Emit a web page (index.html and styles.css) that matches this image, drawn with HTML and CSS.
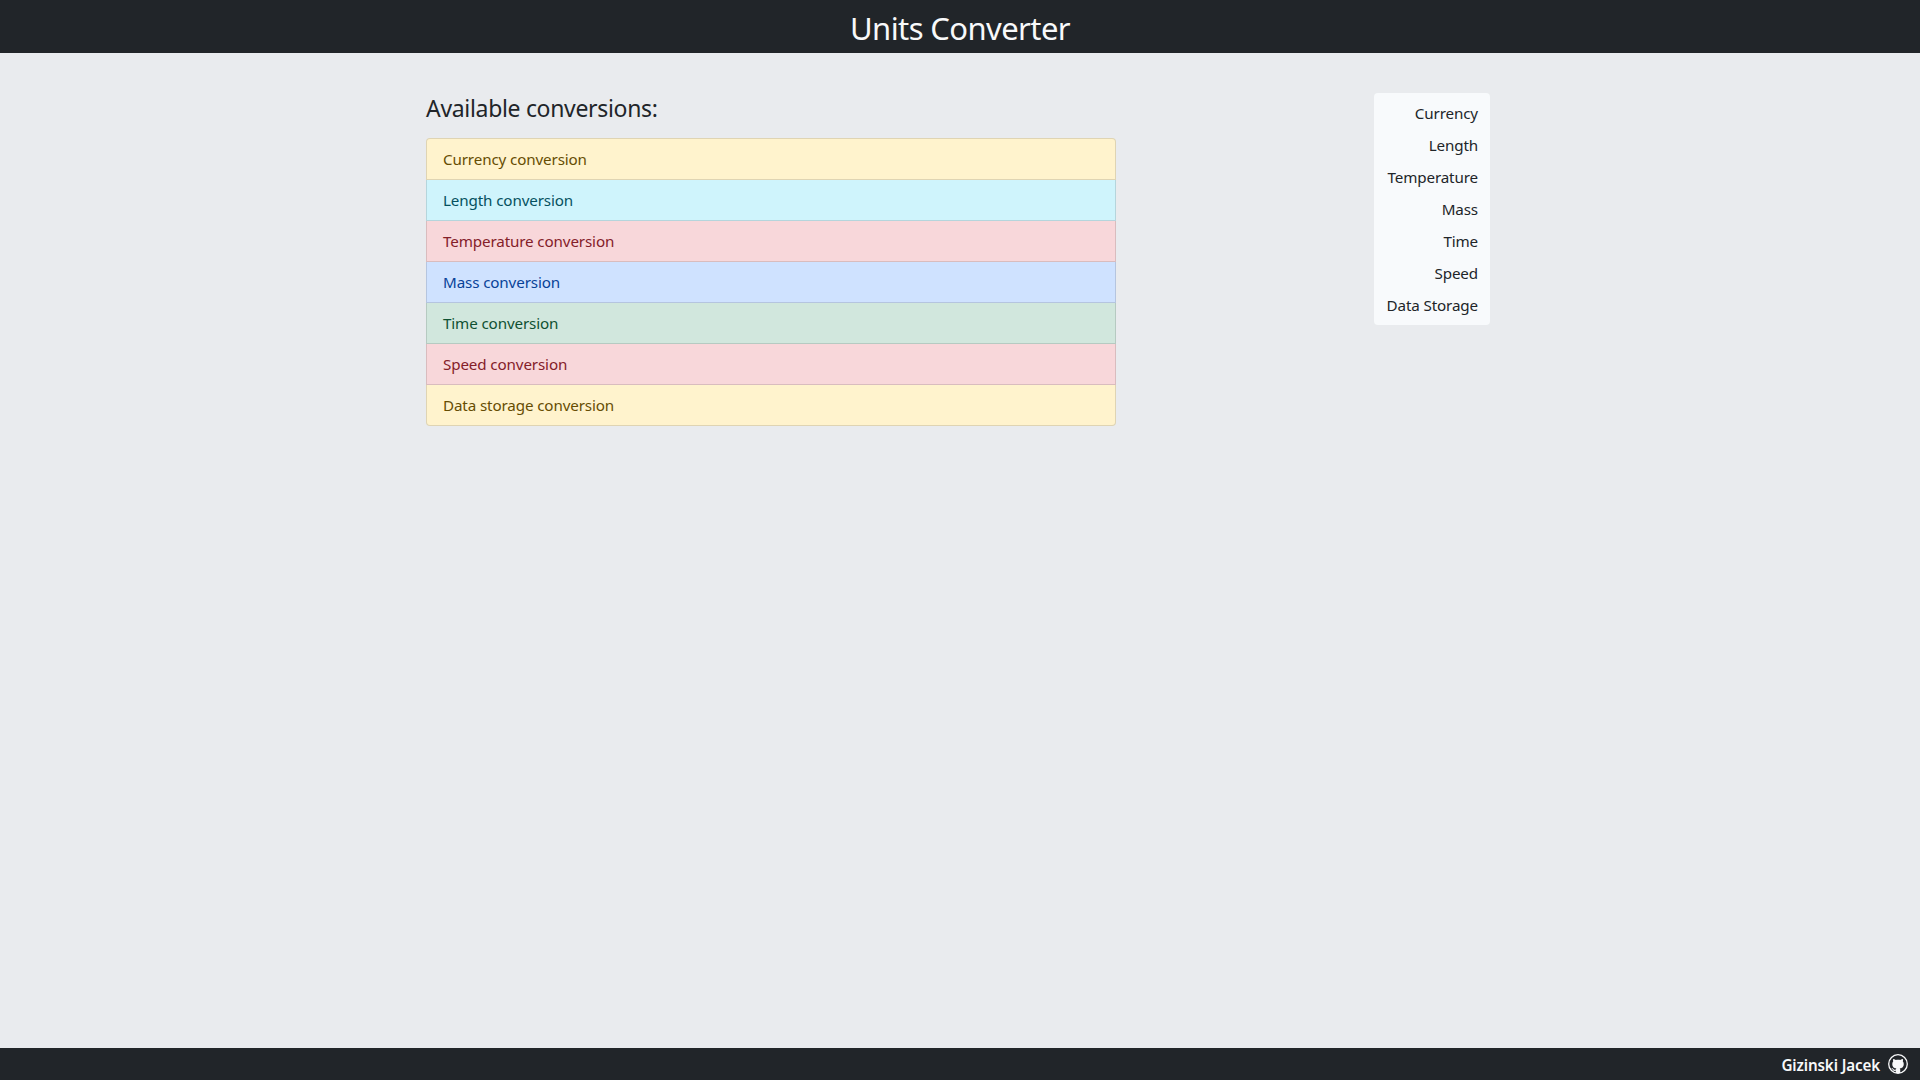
FILE: index.html
```html
<!DOCTYPE html>
<html lang="en">
<head>
<meta charset="utf-8">
<title>Units Converter</title>
<link rel="stylesheet" href="styles.css">
</head>
<body>
<header class="header"><h1 class="header-title">Units Converter</h1></header>
<main class="main">
  <section class="conversions">
    <h2 class="conversions-title">Available conversions:</h2>
    <ul class="list">
      <li class="item warning">Currency conversion</li>
      <li class="item info">Length conversion</li>
      <li class="item danger">Temperature conversion</li>
      <li class="item primary">Mass conversion</li>
      <li class="item success">Time conversion</li>
      <li class="item danger">Speed conversion</li>
      <li class="item warning">Data storage conversion</li>
    </ul>
  </section>
  <nav class="menu">
    <a class="menu-link">Currency</a>
    <a class="menu-link">Length</a>
    <a class="menu-link">Temperature</a>
    <a class="menu-link">Mass</a>
    <a class="menu-link">Time</a>
    <a class="menu-link">Speed</a>
    <a class="menu-link">Data Storage</a>
  </nav>
</main>
<footer class="footer">
  <span class="author">Gizinski Jacek</span>
  <svg class="github" viewBox="0 0 20 20" aria-hidden="true">
    <circle cx="10" cy="10" r="9.3" fill="none" stroke="currentColor" stroke-width="1.3"/>
    <path transform="translate(1 1.4) scale(1.125)" fill="currentColor" d="M5.47 15.59c.4.07.55-.17.55-.38 0-.19-.01-.82-.01-1.49-2.01.37-2.53-.49-2.69-.94-.09-.23-.48-.94-.82-1.13-.28-.15-.68-.52-.01-.53.63-.01 1.08.58 1.23.82.72 1.21 1.87.87 2.33.66.07-.52.28-.87.51-1.07-1.78-.2-3.64-.89-3.64-3.95 0-.87.31-1.59.82-2.15-.08-.2-.36-1.02.08-2.12 0 0 .67-.21 2.2.82.64-.18 1.32-.27 2-.27s1.36.09 2 .27c1.53-1.04 2.2-.82 2.2-.82.44 1.1.16 1.92.08 2.12.51.56.82 1.27.82 2.15 0 3.07-1.87 3.75-3.65 3.95.29.25.54.73.54 1.48 0 1.07-.01 1.93-.01 2.2 0 .21.15.46.55.38z"/>
  </svg>
</footer>
</body>
</html>
```
FILE: styles.css
```css
* { box-sizing: border-box; }

body {
  margin: 0;
  min-height: 100vh;
  display: flex;
  flex-direction: column;
  background: #e9ebee;
  color: #212529;
  font: 400 15.2px/24px "Noto Sans", "Open Sans", sans-serif;
  letter-spacing: -0.13px;
}

h1, h2, ul { margin: 0; padding: 0; font-weight: 400; }

.header {
  height: 53px;
  background: #212529;
  color: #f8f9fa;
  text-align: center;
}

.header-title { font-size: 31px; line-height: 57px; letter-spacing: -0.6px; }

.main {
  flex: 1;
  display: flex;
  justify-content: space-between;
  align-items: flex-start;
  width: 1064px;
  margin-left: 426px;
  padding-top: 40px;
}

.conversions { width: 690px; }

.conversions-title {
  font-size: 23px;
  line-height: 31px;
  letter-spacing: -0.32px;
  margin-bottom: 14px;
}

.list { list-style: none; }

.item {
  height: 41px;
  padding: 8px 16px;
  border: 1px solid rgba(0, 0, 0, 0.125);
  border-top-width: 0;
}

.item:first-child {
  height: 42px;
  border-top-width: 1px;
  border-radius: 4px 4px 0 0;
}

.item:last-child { border-radius: 0 0 4px 4px; }

.warning { background: #fff3cd; color: #664d03; }
.info { background: #cff4fc; color: #055160; }
.danger { background: #f8d7da; color: #842029; }
.primary { background: #cfe2ff; color: #084298; }
.success { background: #d1e7dd; color: #0f5132; }

.menu {
  display: flex;
  flex-direction: column;
  align-items: flex-end;
  width: 116px;
  padding: 4px 12px;
  border-radius: 4px;
  background: #f8fafc;
}

.menu-link { padding: 4px 0; white-space: nowrap; }

.footer {
  display: flex;
  justify-content: flex-end;
  align-items: center;
  gap: 8px;
  height: 32px;
  padding: 0 12px;
  background: #212529;
  color: #f8f9fa;
}

.author { font-weight: 600; line-height: 32px; padding-top: 2px; }

.github { width: 20px; height: 20px; }
```
